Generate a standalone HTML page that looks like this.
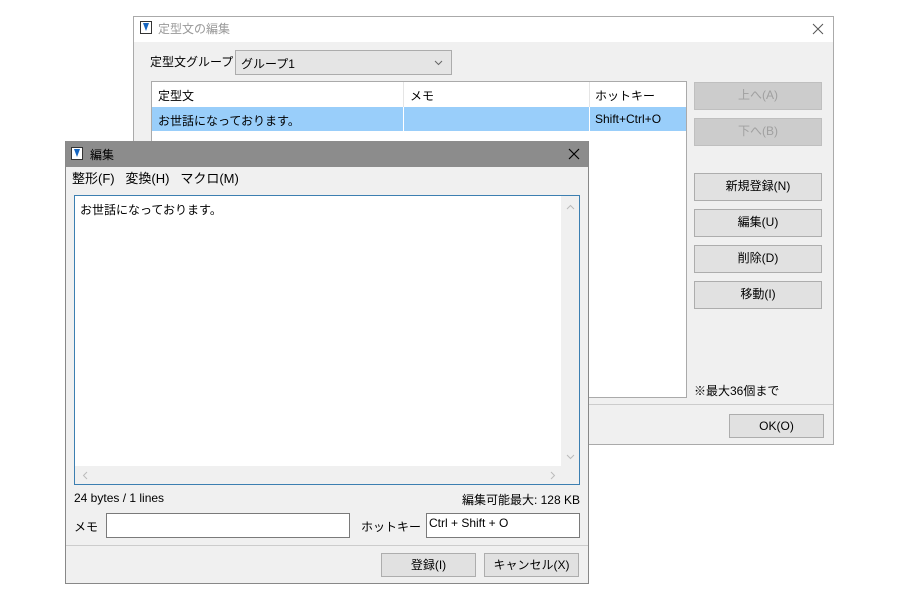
<!DOCTYPE html><html><head><meta charset="utf-8"><style>
body{margin:0;width:900px;height:600px;background:#fff;position:relative;overflow:hidden;font-family:"Liberation Sans","Noto Sans CJK JP",sans-serif;font-size:12px;color:#000}
.a{position:absolute;box-sizing:border-box}
.btn{position:absolute;box-sizing:border-box;background:#e1e1e1;border:1px solid #adadad;text-align:center;line-height:25px;font-size:12px}
.dis{color:#a0a0a0;background:#ccc;border-color:#bfbfbf}
.icon{position:absolute;width:12px;height:13px;border:1px solid #333;background:#fff;box-sizing:border-box}
.icon:after{content:"";position:absolute;left:2px;top:1px;border-left:3px solid transparent;border-right:3px solid transparent;border-top:8px solid #1565c0}
</style></head><body>
<!-- back window -->
<div class="a" style="left:133px;top:16px;width:701px;height:429px;background:#f0f0f0;border:1px solid #aaa"></div>
<div class="a" style="left:134px;top:17px;width:699px;height:25px;background:#fff"></div>
<div class="icon" style="left:140px;top:21px"></div>
<div class="a" style="left:158px;top:20px;color:#999;font-size:12px">定型文の編集</div>
<svg class="a" style="left:812px;top:23px" width="12" height="12"><path d="M1 1L11 11M11 1L1 11" stroke="#555" stroke-width="1"/></svg>
<div class="a" style="left:150px;top:53px">定型文グループ</div>
<div class="a" style="left:235px;top:50px;width:217px;height:25px;background:#e5e5e5;border:1px solid #acacac;padding:4px 5px">グループ1<svg style="position:absolute;right:8px;top:9px" width="9" height="6"><path d="M1 1L4.5 4.5L8 1" stroke="#666" fill="none"/></svg></div>
<div class="a" style="left:151px;top:81px;width:536px;height:317px;background:#fff;border:1px solid #aaa"></div>
<div class="a" style="left:403px;top:82px;width:1px;height:25px;background:#e5e5e5"></div>
<div class="a" style="left:589px;top:82px;width:1px;height:25px;background:#e5e5e5"></div>
<div class="a" style="left:158px;top:87px">定型文</div>
<div class="a" style="left:410px;top:87px">メモ</div>
<div class="a" style="left:595px;top:87px">ホットキー</div>
<div class="a" style="left:152px;top:107px;width:534px;height:24px;background:#99cefa"></div>
<div class="a" style="left:403px;top:107px;width:1px;height:24px;background:#fff"></div>
<div class="a" style="left:589px;top:107px;width:1px;height:24px;background:#fff"></div>
<div class="a" style="left:158px;top:112px">お世話になっております。</div>
<div class="a" style="left:595px;top:112px">Shift+Ctrl+O</div>
<div class="btn dis" style="left:694px;top:82px;width:128px;height:28px">上へ(A)</div>
<div class="btn dis" style="left:694px;top:118px;width:128px;height:28px">下へ(B)</div>
<div class="btn" style="left:694px;top:173px;width:128px;height:28px">新規登録(N)</div>
<div class="btn" style="left:694px;top:209px;width:128px;height:28px">編集(U)</div>
<div class="btn" style="left:694px;top:245px;width:128px;height:28px">削除(D)</div>
<div class="btn" style="left:694px;top:281px;width:128px;height:28px">移動(I)</div>
<div class="a" style="left:694px;top:382px">※最大36個まで</div>
<div class="a" style="left:588px;top:404px;width:245px;height:1px;background:#ccc"></div>
<div class="btn" style="left:729px;top:414px;width:95px;height:24px;line-height:22px">OK(O)</div>
<!-- front window -->
<div class="a" style="left:65px;top:141px;width:524px;height:443px;background:#f0f0f0;border:1px solid #888"></div>
<div class="a" style="left:66px;top:141px;width:522px;height:26px;background:#8c8c8c"></div>
<div class="icon" style="left:71px;top:147px"></div>
<div class="a" style="left:90px;top:146px">編集</div>
<svg class="a" style="left:568px;top:148px" width="12" height="12"><path d="M1 1L11 11M11 1L1 11" stroke="#000" stroke-width="1.2"/></svg>
<div class="a" style="left:72px;top:168px;font-size:13px">整形(F)&nbsp;&nbsp;&nbsp;変換(H)&nbsp;&nbsp;&nbsp;マクロ(M)</div>
<div class="a" style="left:74px;top:195px;width:506px;height:290px;background:#fff;border:1px solid #3c7fb1"></div>
<div class="a" style="left:561px;top:196px;width:18px;height:270px;background:#f0f0f0"></div>
<div class="a" style="left:75px;top:466px;width:504px;height:18px;background:#f0f0f0"></div>
<svg class="a" style="left:566px;top:204px" width="9" height="6"><path d="M1 5L4.5 1.5L8 5" stroke="#bbb" fill="none"/></svg>
<svg class="a" style="left:566px;top:454px" width="9" height="6"><path d="M1 1L4.5 4.5L8 1" stroke="#bbb" fill="none"/></svg>
<svg class="a" style="left:82px;top:471px" width="6" height="9"><path d="M5 1L1.5 4.5L5 8" stroke="#bbb" fill="none"/></svg>
<svg class="a" style="left:550px;top:471px" width="6" height="9"><path d="M1 1L4.5 4.5L1 8" stroke="#bbb" fill="none"/></svg>
<div class="a" style="left:80px;top:201px">お世話になっております。</div>
<div class="a" style="left:74px;top:491px">24 bytes / 1 lines</div>
<div class="a" style="right:320px;top:491px">編集可能最大: 128 KB</div>
<div class="a" style="left:74px;top:518px">メモ</div>
<div class="a" style="left:106px;top:513px;width:244px;height:25px;background:#fff;border:1px solid #7a7a7a"></div>
<div class="a" style="left:361px;top:518px">ホットキー</div>
<div class="a" style="left:426px;top:513px;width:154px;height:25px;background:#fff;border:1px solid #7a7a7a;padding:2px 2px">Ctrl + Shift + O</div>
<div class="a" style="left:66px;top:545px;width:522px;height:1px;background:#ccc"></div>
<div class="btn" style="left:381px;top:553px;width:95px;height:24px;line-height:22px">登録(I)</div>
<div class="btn" style="left:484px;top:553px;width:95px;height:24px;line-height:22px">キャンセル(X)</div>
</body></html>
